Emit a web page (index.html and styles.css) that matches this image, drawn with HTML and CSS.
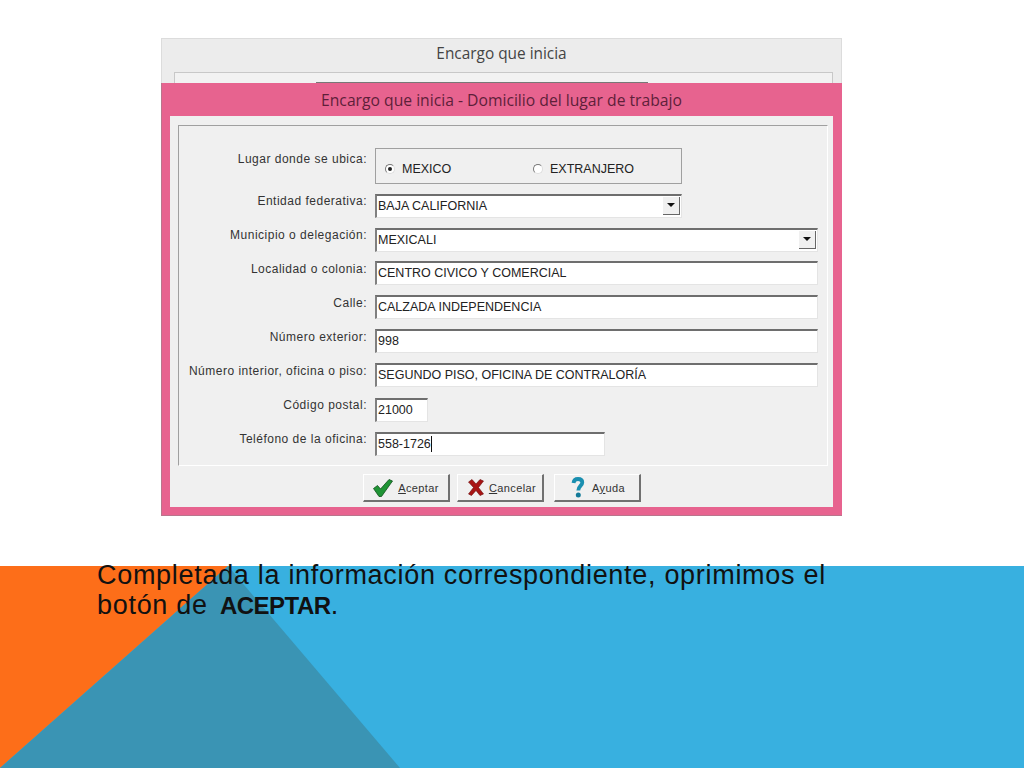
FILE: index.html
```html
<!DOCTYPE html>
<html lang="es">
<head>
    <meta charset="UTF-8">
    <title>Encargo que inicia</title>
    <link rel="stylesheet" href="styles.css">
</head>
<body>
    <div class="slide">
        <div class="windows">
            <div class="back-window">
                <div class="back-title">Encargo que inicia</div>
                <div class="back-frame"><div class="back-tab"></div></div>
            </div>
            <div class="dialog">
                <div class="dialog-title">Encargo que inicia - Domicilio del lugar de trabajo</div>
                <div class="dialog-body">
                    <div class="group">
                        <div class="row">
                            <div class="label label-first">Lugar donde se ubica:</div>
                            <div class="radio-box">
                                <div class="radio-item radio-mexico"><span class="radio checked"></span>MEXICO</div>
                                <div class="radio-item"><span class="radio"></span>EXTRANJERO</div>
                            </div>
                        </div>
                        <div class="row">
                            <div class="label">Entidad federativa:</div>
                            <div class="field field-mid">BAJA CALIFORNIA<span class="drop"><span class="arrow"></span></span></div>
                        </div>
                        <div class="row">
                            <div class="label">Municipio o delegación:</div>
                            <div class="field">MEXICALI<span class="drop"><span class="arrow"></span></span></div>
                        </div>
                        <div class="row">
                            <div class="label">Localidad o colonia:</div>
                            <div class="field field-up">CENTRO CIVICO Y COMERCIAL</div>
                        </div>
                        <div class="row">
                            <div class="label">Calle:</div>
                            <div class="field field-up">CALZADA INDEPENDENCIA</div>
                        </div>
                        <div class="row">
                            <div class="label">Número exterior:</div>
                            <div class="field field-up">998</div>
                        </div>
                        <div class="row">
                            <div class="label">Número interior, oficina o piso:</div>
                            <div class="field field-up">SEGUNDO PISO, OFICINA DE CONTRALORÍA</div>
                        </div>
                        <div class="row">
                            <div class="label">Código postal:</div>
                            <div class="field field-zip">21000</div>
                        </div>
                        <div class="row">
                            <div class="label">Teléfono de la oficina:</div>
                            <div class="field field-phone">558-1726<span class="caret"></span></div>
                        </div>
                    </div>
                    <div class="buttons">
                        <div class="btn">
                            <svg width="20" height="18" viewBox="0 0 20 18"><path d="M0.5 9.5 L4.5 6.5 L7.5 10 L16 0.5 L19.5 2 L8.5 17.5 L6 17.5 Z" fill="#1f9435" stroke="#0f4f1a" stroke-width="0.8"/></svg>
                            <span><u>A</u>ceptar</span>
                        </div>
                        <div class="btn btn-cancel">
                            <svg width="16" height="17" viewBox="0 0 16 17"><path d="M0.5 3 L4 0.5 L8 5 L12 0.5 L15.5 2 L10.5 8.5 L15.5 15 L12 16.5 L8 11.5 L3.5 16.5 L0.5 15 L5.5 8.5 Z" fill="#a81414" stroke="#6a0c0c" stroke-width="0.6"/></svg>
                            <span><u>C</u>ancelar</span>
                        </div>
                        <div class="btn btn-help">
                            <svg width="14" height="21" viewBox="0 0 14 21"><path d="M2.5 6 C2.8 3 5 2 7 2 C9.8 2 11.3 3.6 11.3 5.6 C11.3 8.5 7.3 9 7.3 13.5" fill="none" stroke="#1a8fb0" stroke-width="3.8"/><circle cx="7.3" cy="18" r="2.5" fill="#137a99"/></svg>
                            <span>A<u>y</u>uda</span>
                        </div>
                    </div>
                </div>
            </div>
        </div>
        <div class="band">
            <svg class="band-shapes" width="1024" height="202" viewBox="0 0 1024 202">
                <rect width="1024" height="202" fill="#38b0e0"/>
                <polygon points="0,0 228,0 0,202" fill="#fd6e19"/>
                <polygon points="228,0 400,202 0,202" fill="#3a94b4"/>
            </svg>
            <p class="caption">Completada la información correspondiente, oprimimos el botón de <strong>ACEPTAR</strong>.</p>
        </div>
    </div>
</body>
</html>
```

FILE: styles.css
```css
body {
    margin: 0;
    background-color: #fff;
    font-family: "Liberation Sans", Arial, sans-serif;
}

.slide {
    width: 1024px;
    height: 768px;
    overflow: hidden;
    display: flex;
    flex-direction: column;
}

.windows {
    position: relative;
    width: 681px;
    height: 478px;
    margin: 38px 0 0 161px;
}

.back-window {
    height: 100%;
    box-sizing: border-box;
    background-color: #ececec;
    border: 1px solid #dcdcdc;
}

.back-title {
    height: 33px;
    line-height: 30px;
    text-align: center;
    font-family: "Open Sans", sans-serif;
    font-size: 15.4px;
    color: #444;
}

.back-frame {
    height: 11px;
    margin: 0 8px 0 12px;
    background-color: #f2f2f2;
    border-top: 1px solid #c8c8c8;
    border-left: 1px solid #c8c8c8;
    border-right: 1px solid #c8c8c8;
}

.back-tab {
    width: 332px;
    height: 1px;
    margin: 9px 0 0 141px;
    background-color: #777;
}

.dialog {
    position: absolute;
    left: 0;
    top: 45px;
    width: 681px;
    height: 433px;
    box-sizing: border-box;
    background-color: #e7638f;
    padding: 0 9px 9px;
    display: flex;
    flex-direction: column;
    box-shadow: inset 1px 0 0 #b9758c, inset 0 -1px 0 #b9758c;
}

.dialog-title {
    height: 33px;
    flex-shrink: 0;
    line-height: 34px;
    text-align: center;
    font-family: "Open Sans", sans-serif;
    font-size: 15.7px;
    color: #5e1f3a;
}

.dialog-body {
    flex: 1;
    background-color: #f0f0f0;
    padding: 9px 5px 0 8px;
}

.group {
    height: 341px;
    box-sizing: border-box;
    border-top: 1px solid #a0a0a0;
    border-left: 1px solid #a0a0a0;
    border-right: 1px solid #fff;
    border-bottom: 1px solid #fff;
    padding-top: 22px;
    display: flex;
    flex-direction: column;
    gap: 10px;
}

.row {
    display: flex;
    gap: 8px;
    padding-right: 9px;
}

.label {
    width: 188px;
    flex-shrink: 0;
    text-align: right;
    font-size: 12px;
    line-height: 15px;
    color: #333;
    letter-spacing: 0.5px;
}

.label-first {
    padding-top: 4px;
}

.radio-box {
    width: 307px;
    height: 36px;
    box-sizing: border-box;
    border: 1px solid #a0a0a0;
    display: flex;
    align-items: center;
    padding: 6px 0 0 9px;
    font-size: 12.5px;
    color: #222;
}

.radio-item {
    display: flex;
    align-items: center;
    gap: 7px;
}

.radio-mexico {
    width: 148px;
}

.radio {
    width: 10px;
    height: 10px;
    box-sizing: border-box;
    border-radius: 50%;
    border: 1px solid #777;
    border-right-color: #ddd;
    border-bottom-color: #ddd;
    background-color: #fff;
    display: flex;
    align-items: center;
    justify-content: center;
}

.checked::after {
    content: "";
    width: 4px;
    height: 4px;
    border-radius: 50%;
    background-color: #222;
}

.field {
    flex: 1;
    height: 24px;
    box-sizing: border-box;
    display: flex;
    align-items: center;
    background-color: #fff;
    border-top: 2px solid #6e6e6e;
    border-left: 2px solid #808080;
    border-right: 1px solid #e4e4e4;
    border-bottom: 1px solid #e4e4e4;
    padding: 0 0 2px 1px;
    font-size: 12.5px;
    color: #222;
}

.field-up {
    margin: -1px 0 1px;
}

.field-mid {
    flex: none;
    width: 307px;
}

.field-zip {
    flex: none;
    width: 53px;
}

.field-phone {
    flex: none;
    width: 230px;
}

.caret {
    width: 1px;
    height: 16px;
    background-color: #111;
}

.drop {
    width: 17px;
    height: 18px;
    margin-left: auto;
    margin-right: 1px;
    box-sizing: border-box;
    background-color: #f0f0f0;
    border-right: 1px solid #666;
    border-bottom: 1px solid #666;
    display: flex;
    align-items: center;
    justify-content: center;
}

.arrow {
    width: 0;
    height: 0;
    border-left: 4px solid transparent;
    border-right: 4px solid transparent;
    border-top: 4px solid #111;
}

.buttons {
    display: flex;
    gap: 7px;
    padding: 8px 0 0 185px;
}

.btn {
    width: 87px;
    height: 28px;
    box-sizing: border-box;
    display: flex;
    align-items: center;
    justify-content: center;
    gap: 5px;
    background-color: #f0f0f0;
    border-top: 1px solid #fff;
    border-left: 1px solid #fff;
    border-right: 2px solid #707070;
    border-bottom: 2px solid #707070;
    font-size: 11px;
    letter-spacing: 0.4px;
    color: #333;
}

.btn-cancel {
    padding-left: 4px;
}

.btn-help {
    margin-left: 3px;
    gap: 7px;
    padding-left: 2px;
}

.band {
    position: relative;
    flex: 1;
    margin-top: 50px;
}

.band-shapes {
    display: block;
}

.caption {
    position: absolute;
    left: 97px;
    top: -6px;
    width: 760px;
    margin: 0;
    font-family: "Liberation Sans", Arial, sans-serif;
    font-size: 27px;
    line-height: 30px;
    letter-spacing: 0.7px;
    color: #111;
}

.caption strong {
    margin-left: 4px;
    font-size: 24px;
    letter-spacing: -0.5px;
}
```
